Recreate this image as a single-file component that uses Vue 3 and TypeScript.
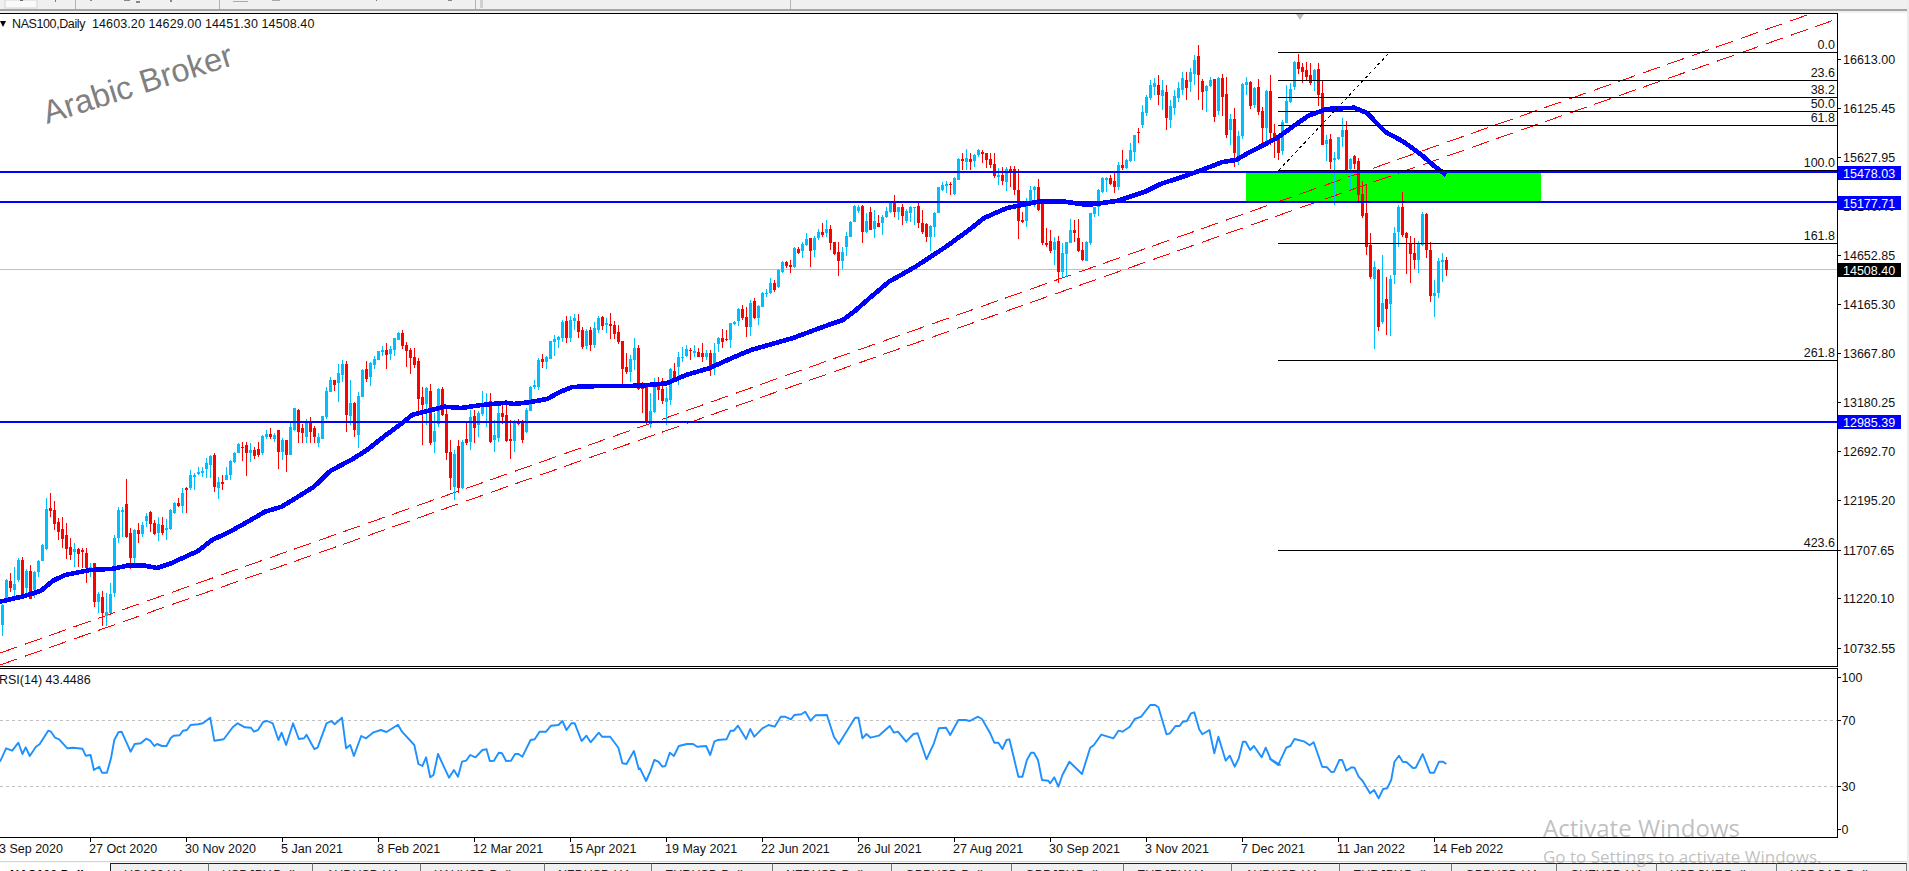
<script setup lang="ts">
type Raw = [number, number, number, number, number, number]
interface Bar { x: number; top: number; bot: number; wt: number; wb: number; up: boolean }

const list7: Raw[] = [
  [5,615,675,612,707,1],[15,540,597,538,600,1],[25,543,565,520,575,0],[35,552,570,500,590,1],[45,480,540,473,545,1],
  [55,480,585,472,590,0],[65,513,565,508,590,1],[75,512,597,495,598,0],[85,515,570,512,595,1],[95,483,515,480,530,1],
  [103,435,482,433,484,1],[113,327,448,295,450,1],[123,325,333,280,350,0],[133,330,372,302,390,0],[143,365,395,355,420,0],
  [153,387,417,350,445,0],[163,405,447,370,478,0],[173,442,465,415,480,0],[183,448,455,430,500,1],[193,448,462,445,500,0],
  [203,450,456,445,505,0],[212,460,505,445,548,0],[222,500,510,490,530,1],[232,490,605,488,620,0],[242,583,605,575,640,1],
  [252,590,640,573,678,0],[262,635,648,580,678,1],[270,582,640,550,640,1],[280,415,580,405,590,1],[290,330,413,320,428,1],
  [300,330,336,320,412,1],[310,312,410,237,415,0],[320,400,475,385,508,0],[330,390,475,388,490,1],[338,390,403,368,430,0],
  [348,375,403,365,410,1],[358,347,363,338,380,1],[368,335,373,333,395,0],[378,370,402,360,405,0],[388,372,400,352,422,1],
  [398,376,400,352,405,0],[408,385,390,357,420,1],[418,330,387,327,390,1],[428,310,340,305,342,1],[438,310,318,295,322,0],
  [447,280,318,265,340,1],[457,263,270,262,338,0],[466,225,265,210,270,1],[476,225,230,220,270,1],[486,215,222,200,225,1],
  [496,212,218,200,230,1],[505,190,208,175,235,1],[515,168,195,165,235,1],[525,165,262,160,275,0],[535,245,263,230,298,1],
  [545,245,253,225,270,0],[555,225,240,200,240,1],[565,183,225,180,240,1],[575,160,185,155,190,1],[585,133,160,130,160,1],
  [593,140,143,127,183,0],[603,135,158,125,228,0],[613,150,158,130,185,1],[622,150,168,140,178,0],[632,148,165,125,172,0],
  [642,108,160,105,165,1],[652,103,110,90,118,1],[662,103,112,85,118,0],[672,105,118,100,125,1],[682,90,155,90,207,0],
  [692,120,155,115,180,1],[702,120,165,120,215,0],[711,82,165,70,165,1]
]
const list9: Raw[] = [
  [13,384,450,384,452,1],[25,390,455,387,490,0],[37,444,460,432,490,0],[49,423,470,418,490,1],[61,426,455,411,490,0],
  [73,444,470,438,490,0],[85,470,490,460,500,1],[97,408,477,408,477,1],[109,333,411,321,417,1],[121,300,336,291,336,1],
  [133,300,315,300,333,0],[145,279,309,252,366,1],[157,252,285,240,306,1],[169,252,405,243,455,0],[181,369,408,300,435,1],
  [193,369,450,366,472,0],[205,348,465,336,503,1],[217,270,351,267,351,1],[229,267,297,243,306,0],[241,249,291,246,318,1],
  [253,237,255,228,267,1],[265,213,240,213,240,1],[277,210,216,198,228,1],[289,210,225,189,267,0],[301,207,222,198,240,1],
  [313,174,210,174,228,1],[325,159,180,156,180,1],[337,159,198,150,207,0],[349,195,213,186,261,0],[361,210,234,204,282,0],
  [373,231,255,204,264,0],[385,243,357,234,400,0],[397,351,375,321,495,0],[409,324,372,321,435,1],[421,333,490,312,495,0],
  [433,452,485,400,520,1],[445,327,432,324,440,1],[457,327,405,321,408,0],[469,402,520,375,540,0],[481,515,595,480,630,0],
  [493,523,622,510,660,1],[505,497,625,480,638,0],[517,485,625,480,628,1],[529,478,488,430,495,0],[541,411,485,390,510,1],
  [553,408,444,390,490,0],[565,399,435,393,470,1],[577,381,402,333,408,1],[589,372,380,339,441,1],[601,363,485,339,490,0],
  [613,465,480,420,515,1],[625,399,475,372,485,1],[637,399,411,375,432,0],[649,405,482,375,485,0],[661,478,482,420,538,0],
  [673,423,482,420,515,1],[685,429,432,417,435,0],[697,429,480,420,490,0],[709,390,455,385,460,1],[721,321,393,318,393,1],
  [733,315,321,300,327,1],[745,240,321,234,330,1],[757,237,246,222,264,0],[769,231,246,228,267,1],[781,183,237,183,237,1],
  [793,177,186,165,228,1],[805,171,180,168,204,1],[817,126,174,120,186,1],[829,123,174,108,189,0],[841,120,174,108,186,1],
  [853,114,123,102,150,1],[865,123,156,102,174,0],[877,150,201,141,207,0],[889,153,198,147,207,1],[901,150,195,141,213,0],
  [913,144,195,126,204,1],[925,114,150,108,159,1],[937,111,138,108,150,0],[949,129,135,114,159,1],[961,132,138,99,177,0],
  [973,135,162,123,177,0],[985,156,186,135,192,0],[997,183,267,183,312,0],[1009,261,276,219,282,0],[1021,237,276,225,306,1],
  [1033,204,240,174,270,1],[1045,204,327,195,330,0],[1057,323,326,306,400,0],[1069,318,430,312,445,0]
]
const list8: Raw[] = [
  [16,770,880,760,885,0],[27,843,880,790,895,1],[37,770,845,745,850,1],[47,768,780,740,810,0],[58,778,812,745,822,0],
  [68,805,815,770,885,1],[79,718,810,715,825,1],[89,722,750,700,755,0],[100,680,710,665,765,1],[110,680,683,650,695,1],
  [121,658,678,645,680,1],[131,660,662,655,690,0],[142,662,668,645,680,1],[152,665,680,655,682,0],[163,670,680,640,695,0],
  [173,670,682,660,690,1],[184,670,708,660,738,0],[194,670,703,640,735,1],[205,625,642,622,665,1],[215,625,635,598,655,0],
  [226,628,630,600,632,0],[236,580,630,578,655,1],[247,575,582,572,585,1],[257,537,572,533,588,1],[268,537,563,525,570,0],
  [278,560,590,530,622,0],[289,518,592,510,618,1],[299,512,565,505,568,0],[310,527,565,525,585,1],[320,490,530,487,530,1],
  [330,488,492,478,502,1],[341,460,490,445,492,1],[352,460,480,450,485,0],[362,420,470,418,475,1],[372,395,425,392,430,1],
  [383,395,408,392,415,0],[393,405,410,390,430,0],[404,355,410,352,415,1],[414,358,370,352,372,0],[424,342,362,335,385,1],
  [435,328,345,308,348,1],[445,325,362,325,410,0],[456,325,360,318,382,1],[466,305,325,298,330,1],[477,307,315,280,320,0],
  [487,298,310,270,320,1],[498,298,338,285,360,0],[508,335,372,335,375,0],[519,365,392,335,437,0],[529,365,392,350,417,1],
  [540,318,350,305,378,1],[550,275,320,272,320,1],[560,228,275,226,277,1],[571,230,243,225,250,1],[581,228,305,225,338,0],
  [592,272,305,250,310,1],[603,245,300,230,300,0],[613,272,298,240,325,1],[623,278,290,255,292,0],[634,260,280,255,315,1],
  [644,243,260,230,265,1],[655,215,245,212,250,1],[665,215,245,195,260,0],[676,232,245,230,270,1],[686,232,258,222,285,0],
  [697,243,272,238,280,1],[707,232,248,228,275,1],[717,230,235,230,285,1],[728,228,280,212,295,0],[738,280,305,240,312,0],
  [749,282,322,280,335,0],[759,288,322,285,362,1],[770,248,290,245,322,1],[780,172,250,170,250,1],[791,165,180,155,182,1],
  [801,163,168,153,190,1],[812,162,165,155,195,0],[822,145,192,140,195,1],[832,86,150,85,150,1],[842,88,92,68,120,0],
  [853,85,95,58,120,1],[863,88,95,68,120,0],[874,75,92,72,112,1],[884,60,76,57,80,1],[894,66,72,60,100,0],
  [905,68,90,68,115,0],[915,86,105,68,115,0],[926,103,138,70,145,0],[936,136,140,115,165,1],[946,135,152,112,165,0],
  [957,118,155,112,182,1],[967,118,122,108,170,0],[978,118,180,108,195,0],[988,180,272,118,327,0],[999,270,276,245,280,0],
  [1009,215,272,205,290,1],[1020,180,215,168,215,1],[1030,172,180,168,230,1],[1041,172,240,148,243,0],[1051,215,340,210,345,0],
  [1062,338,345,295,350,0],[1072,333,362,300,370,0],[1083,335,360,320,405,1],[1093,333,425,318,458,0],[1104,370,425,338,440,1],
  [1114,335,372,335,440,1],[1124,300,340,268,340,1],[1135,300,310,270,335,0],[1145,325,362,268,365,0],[1155,360,390,335,392,0],
  [1166,335,392,332,392,1],[1176,250,340,248,345,1],[1187,230,252,230,262,1],[1197,180,230,178,258,1],[1208,143,185,140,188,1],
  [1218,145,150,140,185,1],[1228,143,162,135,165,0],[1239,152,172,125,190,0],[1249,105,170,95,180,1],[1260,105,115,60,120,0],
  [1271,90,115,88,118,1],[1281,60,92,40,95,1],[1291,15,65,15,93,1],[1302,5,10,-5,40,0]
]
const listPeak: Raw[] = [
  [1142,112,125,105,128,1],[1146,97,113,95,116,1],[1150,85,98,80,100,1],[1154,83,87,78,95,1],[1158,85,95,75,105,0],
  [1162,90,96,80,110,1],[1166,92,118,85,130,0],[1170,106,120,100,128,1],[1174,96,108,90,115,1],[1178,88,98,82,102,1],
  [1182,78,90,72,95,1],[1186,80,88,72,100,0],[1190,72,82,68,92,1],[1194,60,74,55,85,1],[1198,56,75,45,100,0]
]
const list10: Raw[] = [
  [7,153,186,147,240,0],[19,168,183,165,246,1],[31,150,168,141,171,1],[43,147,261,147,276,0],[55,144,243,141,255,1],
  [67,144,201,132,258,0],[79,192,315,141,324,0],[91,267,300,252,345,1],[103,267,369,234,411,0],[115,318,393,303,405,1],
  [127,162,318,159,327,1],[139,156,165,141,195,1],[151,156,228,153,237,0],[163,174,225,171,234,1],[175,171,246,147,255,0],
  [187,243,294,231,348,0],[199,183,294,180,340,1],[211,183,309,135,345,0],[223,309,324,282,385,0],[235,326,369,312,390,0],
  [247,276,363,270,375,1],[259,213,279,165,280,1],[271,177,216,159,220,1],[283,96,171,93,180,1],[295,96,117,72,132,0],
  [307,111,126,99,158,0],[319,120,141,96,150,0],[331,135,159,99,165,0],[343,120,153,117,183,1],[355,117,195,99,228,0],
  [367,189,345,150,345,0],[379,330,342,315,393,1],[391,327,396,312,417,0],[403,384,390,366,525,1],[415,321,387,321,390,1],
  [427,300,321,264,350,1],[439,300,420,273,430,0],[451,387,417,384,480,1],[463,378,402,375,417,0],[475,393,495,384,513,0]
]
const list6: Raw[] = [
  [487,132,198,93,204,0],[499,189,291,102,315,0],[511,285,381,249,387,0],[523,351,387,333,597,1],[535,360,531,357,543,0],
  [547,459,516,315,522,1],[559,447,477,381,555,0],[571,387,462,375,558,1],[583,249,375,231,402,1],[595,171,246,165,291,1],
  [607,171,255,126,261,0],[619,249,264,246,372,0],[631,279,312,258,399,0],[643,309,330,264,358,0],[655,279,330,272,370,1],
  [667,192,286,186,288,1],[679,192,300,188,324,0],[691,300,438,276,456,0],[703,429,438,390,500,1],[715,333,430,323,445,1],
  [727,330,336,308,396,1],[739,330,360,320,378,0]
]

const snap = (x: number) => 1446 - 4 * Math.round((1446 - x) / 4)
const map = new Map<number, Bar>()
function load(list: Raw[], fx: (v: number) => number, fy: (v: number) => number) {
  for (const r of list) {
    const x = snap(fx(r[0]))
    map.set(x, { x, top: Math.round(fy(r[1])), bot: Math.round(fy(r[2])), wt: Math.round(fy(r[3])), wb: Math.round(fy(r[4])), up: r[5] === 1 })
  }
}
load(list7, v => v / 2.45, v => 400 + v / 3)
load(list9, v => 290 + v / 3, v => 280 + v / 3)
load(list8, v => 640 + v / 2.613, v => 130 + v / 3)
load(listPeak, v => v, v => v)
load(list10, v => 1200 + v / 3, v => 30 + v / 3)
load(list6, v => 1200 + v / 3, v => 150 + v / 3)

const bars: Bar[] = []
let last: Bar = { x: 2, top: 605, bot: 625, wt: 600, wb: 636, up: true }
for (let x = 2; x <= 1446; x += 4) {
  const b = map.get(x) ?? { ...last, x, top: last.top, bot: last.top + 2, wt: last.top - 5, wb: last.top + 6 }
  bars.push(b)
  last = b
}

const maLine = [
  [0,601.7],[24.5,596],[41,590.7],[53,580.7],[65,575],[90,570],[114,568.7],[126.5,565.7],[145,565.7],[157,568],[171,563.3],
  [198,551],[212,540],[228.6,532.3],[245,523.3],[265,511.7],[281.6,506.7],[298,496.7],[314,486.7],[330.6,470.7],[351,460],
  [367,450],[383.7,436.7],[404,421.7],[412,415],[428.6,410.7],[445,406.7],[461,408],[481.6,405],[506,402.7],[514,404],
  [530.6,402],[547,399],[560,392],[572,387],[600,386],[621,386],[640,385.7],[666.8,383.3],[686,375],[709,368.3],[732,358],
  [751,350],[793,338],[820,328],[831,324],[843,320],[854,311.7],[869.6,298],[889,281.7],[915.5,266.7],[946,246.7],[969,230],[984,218],[1007,208],
  [1038,201.7],[1065,201.7],[1087.8,205],[1118,200.7],[1145,191.7],[1160.5,184],[1183,176.7],[1200,170.7],[1222.6,162],
  [1236,160],[1250,152],[1277,138],[1295,125],[1308.5,115.7],[1326.6,109],[1354,107.7],[1367,113],[1385,131.7],[1403.5,141.7],
  [1421.6,155],[1435,166.7],[1446,175]
].map(p => p.join(',')).join(' ')

const rsi3 = [0,365,15,325,30,332,45,308,55,342,63,322,73,348,88,320,97,313,118,272,125,275,135,293,145,298,165,325,180,323,202,326,210,347,222,345,230,390,243,380,250,398,262,398,272,355,280,300,290,277,298,275,320,335,330,312,345,310,358,296,368,302,378,318,385,312,397,318,408,318,418,295,425,287,440,286,448,272,458,270,467,255,485,253,497,250,515,233,525,302,548,298,570,262,582,250,600,262,615,263,622,275,632,270,645,245,655,243,668,250,682,300,690,278,701,315,718,250,732,297,745,295,751,284,770,327,778,323,800,250,812,243,820,253,838,233,848,325,858,315,867,348,885,288,897,295,915,277,933,270,947,276,975,254,985,275,1015,315,1025,372,1035,378,1044,352,1054,412,1062,405,1073,342,1100,413,1112,390,1122,410,1132,365,1142,362,1152,345,1165,352,1182,330,1192,328,1200,363,1210,362,1222,338,1230,340,1240,363,1252,362,1262,342,1270,342,1280,350,1300,300,1310,298,1322,275,1338,275,1350,257,1368,255,1378,243,1388,270,1400,250,1408,250,1425,303,1437,287,1447,307,1467,278,1475,290,1495,290,1515,323,1525,370,1535,372,1553,333,1565,388]
const rsi4 = [0,385,15,423,25,395,35,360,45,365,55,380,62,378,73,338,83,348,95,318,115,312,130,312,140,320,162,318,172,345,182,305,190,300,212,298,222,272,230,272,240,257,260,297,270,267,280,290,300,265,315,255,330,260,345,230,355,230,370,238,378,225,395,223,405,215,418,242,430,226,458,225,475,290,487,312,527,233,535,233,545,295,555,282,565,293,585,287,612,258,622,278,632,275,652,305,670,282,680,280,702,358,720,310,732,265,750,263,760,285,780,240,798,240,808,243,828,230,838,237,858,280,868,308,878,308,888,327,898,300,905,298,927,410,937,410,948,360,958,338,965,338,975,360,985,420,1000,422,1005,430,1015,412,1025,440,1035,405,1052,365,1083,402,1103,323,1112,315,1130,284,1160,295,1172,272,1182,275,1200,260,1212,237,1228,230,1250,195,1262,195,1270,202,1290,283,1298,280,1312,258,1322,258,1330,245,1340,243,1350,220,1358,217,1370,268,1378,283,1395,270,1407,340,1417,290,1435,362,1445,347,1457,380,1467,355,1477,305,1484,305,1495,330,1504,318,1523,352,1533,323,1545,357,1560,368,1568,375]
const rsi5 = [0,357,20,375,40,323,50,318,60,297,85,305,97,316,107,307,128,380,140,382,150,396,157,395,170,360,177,360,187,392,200,382,207,383,217,410,227,423,245,460,255,450,266,475,277,447,287,445,297,420,305,365,316,347,325,365,335,367,350,384,357,383,374,342,392,398,402,398,414,365,424,365,432,372]
function rsiSeg(a: number[], x0: number): string[] {
  const out: string[] = []
  for (let i = 0; i < a.length; i += 2) out.push(`${(x0 + a[i] / 2.45).toFixed(1)},${(640 + a[i + 1] / 3).toFixed(1)}`)
  return out
}
const rsiLine = [...rsiSeg(rsi3, 0), ...rsiSeg(rsi4, 640), ...rsiSeg(rsi5, 1270)].join(' ')

const fibs = [
  { y: 52, t: '0.0' }, { y: 80, t: '23.6' }, { y: 97, t: '38.2' }, { y: 111, t: '50.0' }, { y: 125, t: '61.8' },
  { y: 170, t: '100.0' }, { y: 243, t: '161.8' }, { y: 360, t: '261.8' }, { y: 550, t: '423.6' }
]
const hLines = [171, 201, 421]
const priceLabels = [
  ['16613.00', 59], ['16125.45', 108], ['15627.95', 157], ['15140.40', 206], ['14652.85', 255], ['14165.30', 304],
  ['13667.80', 353], ['13180.25', 402], ['12692.70', 451], ['12195.20', 500], ['11707.65', 550], ['11220.10', 598], ['10732.55', 648]
] as [string, number][]
const boxes = [
  { t: '15478.03', y: 166, bg: '#0000ff' }, { t: '15177.71', y: 196, bg: '#0000ff' },
  { t: '14508.40', y: 263, bg: '#000000' }, { t: '12985.39', y: 415, bg: '#0000ff' }
]
const rsiLabels = [['100', 677], ['70', 720], ['30', 786], ['0', 829]] as [string, number][]
const dates = ['27 Oct 2020','30 Nov 2020','5 Jan 2021','8 Feb 2021','12 Mar 2021','15 Apr 2021','19 May 2021','22 Jun 2021','26 Jul 2021','27 Aug 2021','30 Sep 2021','3 Nov 2021','7 Dec 2021','11 Jan 2022','14 Feb 2022']
const tabs = [
  ['USA30,H4', 98], ['USDJPY,Daily', 104], ['AUDUSD,H4', 108], ['XAUUSD,Daily', 124], ['NZDUSD,H4', 107], ['EURUSD,Daily', 121],
  ['NZDUSD,Daily', 119], ['GBPUSD,Daily', 120], ['GBPJPY,Daily', 112], ['EURJPY,H4', 108], ['AUDUSD,H4', 108], ['EURJPY,Daily', 112],
  ['GBPUSD,H4', 105], ['CHFUSD,H4', 100], ['USDCHF,Daily', 120], ['USDCAD,Daily', 130]
] as [string, number][]
</script>

<template>
  <div class="root">
    <svg class="toolbar" width="1907" height="13" viewBox="0 0 1907 13">
      <rect x="5" y="0" width="32" height="8" fill="#fafafa" stroke="#d4d4d4" />
      <rect x="20" y="0" width="3" height="1" fill="#666" />
      <rect x="55" y="0" width="1" height="2" fill="#777" />
      <rect x="75" y="0" width="1" height="9" fill="#b4b4b4" />
      <rect x="90" y="0" width="2" height="1" fill="#888" />
      <rect x="124" y="0" width="6" height="1" fill="#888" />
      <rect x="136" y="1" width="4" height="2" fill="#888" />
      <rect x="170" y="0" width="2" height="2" fill="#888" />
      <rect x="219" y="0" width="1" height="9" fill="#b4b4b4" />
      <rect x="233" y="1" width="15" height="1" fill="#aaa" />
      <rect x="272" y="0" width="8" height="1" fill="#aaa" />
      <rect x="376" y="0" width="1" height="1" fill="#777" />
      <rect x="448" y="0" width="4" height="1" fill="#888" />
      <rect x="475" y="0" width="1" height="9" fill="#b4b4b4" />
      <rect x="480" y="0" width="3" height="8" fill="#d0d0d0" />
      <rect x="790" y="0" width="1" height="9" fill="#b4b4b4" />
      <rect x="0" y="9" width="1907" height="2" fill="#a4a4a4" />
    </svg>

    <svg class="plot" width="1907" height="654" viewBox="0 13 1907 654">
      <rect x="0" y="14" width="1837" height="652" fill="#fff" />
      <rect x="1246" y="172" width="295" height="30" fill="#00ff00" />
      <rect x="0" y="269" width="1837" height="1" fill="#c0c0c0" />

      <g shape-rendering="crispEdges">
        <line x1="0" y1="653" x2="1810" y2="14" class="chan" />
        <line x1="0" y1="665" x2="1837" y2="19" class="chan" />
        <rect v-for="b in bars" :key="'w' + b.x" :x="b.x" :y="b.wt" width="1" :height="Math.max(1, b.wb - b.wt)" :fill="b.up ? '#00bfff' : '#ff0000'" />
        <rect v-for="b in bars" :key="'b' + b.x" :x="b.x - 1" :y="b.top" width="3" :height="Math.max(1, b.bot - b.top)" :fill="b.up ? '#00bfff' : '#ff0000'" />
        <polyline :points="maLine" fill="none" stroke="#0000ff" stroke-width="4.6" stroke-linejoin="round" />
        <line x1="1279" y1="170" x2="1389" y2="53" stroke="#000" stroke-width="1" stroke-dasharray="3 3" />
      </g>

      <rect v-for="f in fibs" :key="f.t" x="1278" :y="f.y" width="559" height="1" fill="#000" />
      <text v-for="f in fibs" :key="'t' + f.t" x="1835" :y="f.y - 3" text-anchor="end" class="t">{{ f.t }}</text>
      <rect v-for="y in hLines" :key="y" x="0" :y="y" width="1837" height="2" fill="#0000ff" />

      <polygon points="1296,14 1304,14 1300,20" fill="#bbbbbb" />
      <polygon points="0,21 6,21 3,27" fill="#000" />
      <text x="12" y="28" class="t sym">NAS100,Daily</text>
      <text x="92" y="28" class="t ohlc">14603.20 14629.00 14451.30 14508.40</text>
      <text x="47" y="124" transform="rotate(-17.5 47 124)" class="mark">Arabic Broker</text>

      <rect x="0" y="13" width="1837" height="1" fill="#000" />
      <rect x="0" y="666" width="1837" height="1" fill="#000" />
      <rect x="1837" y="13" width="1" height="654" fill="#000" />
      <g v-for="p in priceLabels" :key="p[0]">
        <rect x="1838" :y="p[1]" width="3" height="1" fill="#000" />
        <text x="1843" :y="p[1] + 4.5" class="t">{{ p[0] }}</text>
      </g>
      <g v-for="b in boxes" :key="b.t">
        <rect x="1838" :y="b.y" width="63" height="14" :fill="b.bg" />
        <text x="1843" :y="b.y + 11.5" class="t white">{{ b.t }}</text>
      </g>
    </svg>

    <svg class="plot" width="1907" height="171" viewBox="0 667 1907 171">
      <rect x="0" y="668" width="1837" height="169" fill="#fff" />
      <line x1="0" y1="720.5" x2="1837" y2="720.5" class="lvl" />
      <line x1="0" y1="786.5" x2="1837" y2="786.5" class="lvl" />
      <polyline :points="rsiLine" fill="none" stroke="#1e90ff" stroke-width="1.9" stroke-linejoin="round" />
      <text x="-1" y="684" class="t">RSI(14) 43.4486</text>
      <rect x="0" y="668" width="1838" height="1" fill="#000" />
      <rect x="0" y="837" width="1838" height="1" fill="#000" />
      <rect x="1837" y="668" width="1" height="170" fill="#000" />
      <g v-for="r in rsiLabels" :key="r[0]">
        <rect x="1838" :y="r[1]" width="3" height="1" fill="#000" />
        <text x="1841.5" :y="r[1] + 4.5" class="t">{{ r[0] }}</text>
      </g>
    </svg>

    <div class="dates">
      <span class="date first">3 Sep 2020</span>
      <span v-for="d in dates" :key="d" class="date tick">{{ d }}</span>
    </div>

    <div class="strip">
      <div class="tabs">
        <div class="tab active">NAS100,Daily</div>
        <div v-for="(t, i) in tabs" :key="i" class="tab" :style="{ width: t[1] + 'px' }">{{ t[0] }}</div>
      </div>
    </div>

    <div class="activate">
      <div class="a1">Activate Windows</div>
      <div class="a2">Go to Settings to activate Windows.</div>
    </div>
  </div>
</template>

<style scoped>
.root {
  position: relative;
  width: 1909px;
  height: 871px;
  overflow: hidden;
  background: #fff;
  box-sizing: border-box;
  padding-right: 2px;
  box-shadow: inset -2px 0 0 #ececec;
  font-family: "Liberation Sans", Arial, sans-serif;
}
.toolbar { display: block; background: #f0f0f0; }
.plot { display: block; background: #fff; }
.t {
  font-family: "Liberation Sans", Arial, sans-serif;
  font-size: 12.5px;
  fill: #111;
}
.sym { letter-spacing: -0.4px; }
.ohlc { letter-spacing: 0.1px; }
.white { fill: #fff; }
.mark {
  font-family: "Liberation Sans", Arial, sans-serif;
  font-size: 32.5px;
  fill: #808080;
}
.chan { stroke: #ff0000; stroke-width: 1; stroke-dasharray: 18 8; }
.lvl { stroke: #c0c0c0; stroke-width: 1; stroke-dasharray: 3 3; }
.dates {
  display: flex;
  height: 23px;
  line-height: 23px;
  font-size: 12.5px;
  color: #111;
  white-space: nowrap;
}
.date { flex: 0 0 96px; position: relative; }
.first { flex: 0 0 90px; margin-left: -1px; }
.tick::before {
  content: "";
  position: absolute;
  left: 1px;
  top: 0;
  width: 1px;
  height: 4px;
  background: #000;
}
.strip {
  height: 10px;
  border-top: 1px solid #d4d4d4;
  padding-top: 1px;
  box-sizing: border-box;
  background: #f8f8f8;
}
.tabs {
  display: flex;
  height: 8px;
  overflow: hidden;
  font-size: 12.5px;
  line-height: 14px;
  color: #222;
  white-space: nowrap;
}
.tab {
  flex: none;
  box-sizing: border-box;
  border-top: 1px solid #222;
  border-right: 1px solid #777;
  background: #f0f0f0;
  padding: 4px 0 0 13px;
  overflow: hidden;
}
.tab.active {
  width: 111px;
  background: #fff;
  border-top: none;
  border-right: 1px solid #222;
  padding: 5px 0 0 10px;
  color: #000;
  font-weight: bold;
}
.activate {
  position: absolute;
  left: 1543px;
  top: 813px;
  color: rgba(130, 130, 130, 0.5);
  font-family: "Open Sans", "Liberation Sans", sans-serif;
  white-space: nowrap;
}
.a1 { font-size: 24px; line-height: 30px; }
.a2 { font-size: 17px; line-height: 24px; margin-top: 2px; }
</style>

<style>
html, body { margin: 0; padding: 0; background: #fff; }
</style>
